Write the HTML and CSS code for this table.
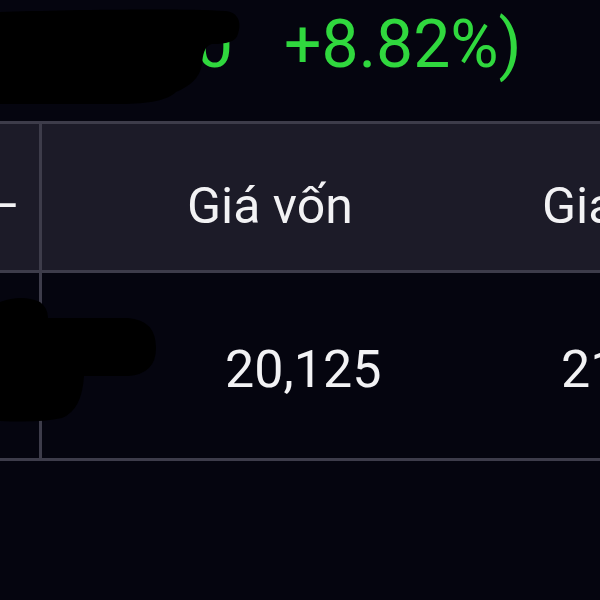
FILE: index.html
```html
<!DOCTYPE html>
<html lang="vi">
<head>
<meta charset="utf-8">
<title>Danh mục</title>
<link rel="stylesheet" href="styles.css">
</head>
<body>
<div class="screen">
  <div class="summary">
    <div class="quote"><span class="frag">0</span><span class="pct">+8.82%)</span></div>
    <svg class="redact redact-top" width="250" height="112" viewBox="0 0 250 112">
      <path d="M0,12 C60,10 180,8 225,11 C238,12 242,22 238,34 C236,42 226,44 212,44 C204,46 203,55 202,64 C200,78 190,86 176,92 C168,100 150,104 120,104 L0,104 Z" fill="#000"/>
    </svg>
  </div>
  <div class="table">
    <div class="row head">
      <div class="cell c1"><span class="dash">–</span></div>
      <div class="cell c2">Giá vốn</div>
      <div class="cell c3">Giá thị trường</div>
    </div>
    <div class="row body-row">
      <div class="cell c1"></div>
      <div class="cell c2">20,125</div>
      <div class="cell c3">21,900</div>
    </div>
    <svg class="redact redact-row" width="170" height="140" viewBox="0 0 170 140">
      <path d="M0,12 Q22,4 40,12 Q48,18 48,28 L128,28 Q156,30 156,58 Q156,84 128,86 L84,86 Q82,120 62,128 Q40,133 0,131 Z" fill="#000"/>
    </svg>
  </div>
</div>
</body>
</html>
```

FILE: styles.css
```css
html, body {
  margin: 0;
  padding: 0;
  background: #05050f;
}

body {
  font-family: Roboto, "Noto Sans", sans-serif;
  color: #f2f2f4;
  width: 600px;
  height: 600px;
  overflow: hidden;
}

.screen {
  position: relative;
  width: 600px;
  height: 600px;
  overflow: hidden;
}

.summary {
  position: relative;
  height: 121px;
}

.quote {
  display: flex;
  padding-top: 12px;
  padding-left: 196px;
  font-size: 66px;
  line-height: 66px;
  color: #30d83e;
  white-space: nowrap;
}

.pct {
  margin-left: 51px;
}

.redact {
  position: absolute;
  left: 0;
}

.redact-top {
  top: 0;
}

.table {
  position: relative;
  border-top: 3px solid #3d3c4a;
}

.redact-row {
  top: 166px;
}

.row {
  display: flex;
  border-bottom: 3px solid #3d3c4a;
  white-space: nowrap;
}

.head {
  height: 146px;
  background: #1c1b28;
  font-size: 50px;
  line-height: 50px;
}

.body-row {
  height: 185px;
  font-size: 52px;
  line-height: 52px;
}

.cell {
  box-sizing: border-box;
  overflow: hidden;
}

.c1 {
  width: 42px;
  flex: none;
  border-right: 3px solid #3d3c4a;
  display: flex;
  justify-content: flex-end;
}

.c2 {
  width: 356px;
  flex: none;
}

.c3 {
  flex: 1;
}

.head .cell {
  padding-top: 57px;
}

.head .c1 {
  padding-right: 19px;
}

.head .c2 {
  padding-left: 145px;
}

.head .c3 {
  padding-left: 144px;
}

.body-row .cell {
  padding-top: 71px;
}

.body-row .c2 {
  padding-left: 183px;
}

.body-row .c3 {
  padding-left: 163px;
}
```
